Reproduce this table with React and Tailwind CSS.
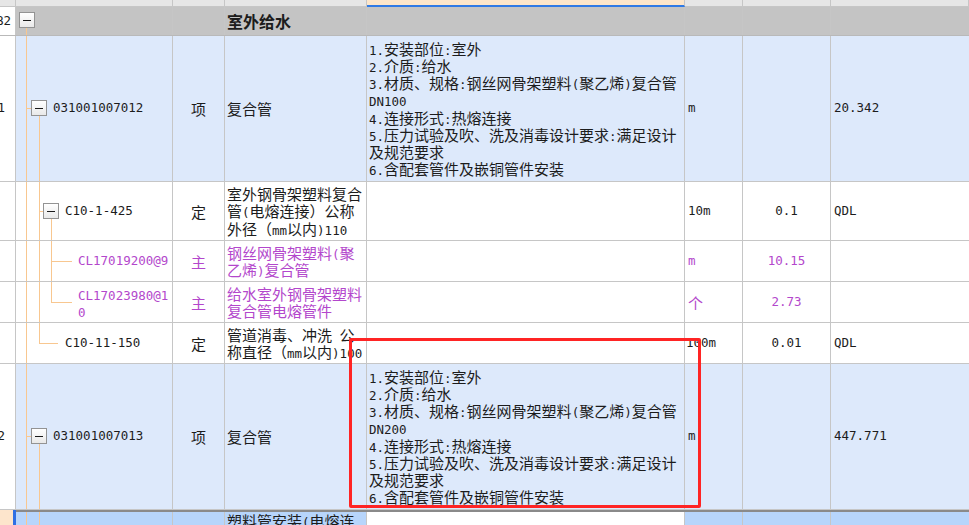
import clsx from "clsx";

const LINE = "absolute bg-[#f8c790]";
const PURPLE = "text-[#b347cc]";

// SimSun-style: half-width ASCII, full-width CJK
function T({ s }) {
  return s
    .split(/([\x20-\x7e]+)/)
    .filter(Boolean)
    .map((p, i) =>
      /[\x20-\x7e]/.test(p[0]) ? (
        <span key={i} className="font-['DejaVu_Sans_Mono',monospace] text-[12.5px] leading-none whitespace-pre">
          {p}
        </span>
      ) : (
        <span key={i}>{p}</span>
      )
    );
}

function Lines({ rows }) {
  return (
    <div>
      {rows.map((r, i) => (
        <div key={i} className="whitespace-nowrap h-[17.2px]">
          <T s={r} />
        </div>
      ))}
    </div>
  );
}

function Box({ className }) {
  return (
    <div
      className={clsx(
        "absolute w-[16px] h-[16px] border border-[#939393] bg-linear-to-b from-white to-[#e9e9e9] flex items-center justify-center",
        className
      )}
    >
      <div className="w-[8px] h-px bg-[#1a1a1a]" />
    </div>
  );
}

function Cell({ w, className, children }) {
  return (
    <div className={clsx(w, "shrink-0 border-r border-[#c6c6c6] flex items-center overflow-hidden", className)}>
      {children}
    </div>
  );
}

const W = ["w-[16px]", "w-[157px]", "w-[52px]", "w-[142px]", "w-[318px]", "w-[58px]", "w-[88px]", "flex-1"];

const desc = (dn) => [
  "1.安装部位:室外",
  "2.介质:给水",
  "3.材质、规格:钢丝网骨架塑料(聚乙烯)复合管",
  dn,
  "4.连接形式:热熔连接",
  "5.压力试验及吹、洗及消毒设计要求:满足设计",
  "及规范要求",
  "6.含配套管件及嵌铜管件安装",
];

function ItemRow({ num, code, dn, qty }) {
  return (
    <div className="flex h-[146px] border-b border-[#c6c6c6] bg-[#dde9fb]">
      <Cell w={W[0]} className="bg-white justify-end pr-[10px]">
        <T s={num} />
      </Cell>
      <Cell w={W[1]} className="relative pl-[37px]">
        <div className={clsx(LINE, "left-[10px] inset-y-0 w-px")} />
        <div className={clsx(LINE, "left-[10px] top-[72px] w-[5px] h-px")} />
        <div className={clsx(LINE, "left-[23px] top-[80px] bottom-0 w-px")} />
        <Box className="left-[15px] top-[64px]" />
        <T s={code} />
      </Cell>
      <Cell w={W[2]} className="justify-center">项</Cell>
      <Cell w={W[3]} className="pl-[2px]">复合管</Cell>
      <Cell w={W[4]} className="pl-[2px]">
        <Lines rows={desc(dn)} />
      </Cell>
      <Cell w={W[5]} className="pl-[3px]">
        <T s="m" />
      </Cell>
      <Cell w={W[6]} />
      <Cell w={W[7]} className="pl-[3px] border-r-0">
        <T s={qty} />
      </Cell>
    </div>
  );
}

export default function App() {
  return (
    <div className="relative w-[969px] h-[525px] overflow-hidden bg-white text-[15px] leading-[17px] text-[#1c1c1c] font-['Noto_Sans_CJK_SC',sans-serif]">
      {/* column header strip */}
      <div className="flex h-[7px] bg-[#e6e6e6]">
        {W.map((w, i) =>
          i === 4 ? (
            <div key={i} className={clsx(w, "shrink-0 bg-[#fde6ca] border-r border-[#c6c6c6] border-b-2 border-b-[#2f7ae5]")} />
          ) : (
            <div key={i} className={clsx(w, "shrink-0 border-r border-b border-[#c6c6c6]")} />
          )
        )}
      </div>

      {/* section row */}
      <div className="flex h-[29px] border-b border-[#b9b9b9] bg-[#c4c4c4]">
        <Cell w={W[0]} className="bg-white justify-end pr-[4px]">
          <T s="B2" />
        </Cell>
        <Cell w={W[1]} className="relative border-[#b9b9b9]">
          <Box className="left-[3px] top-[5px]" />
          <div className={clsx(LINE, "left-[10px] top-[21px] bottom-0 w-px")} />
        </Cell>
        <Cell w={W[2]} className="border-[#b9b9b9]" />
        <Cell w={W[3]} className="pl-[2px] font-bold text-[16px] border-[#b9b9b9]">室外给水</Cell>
        <Cell w={W[4]} className="border-[#b9b9b9]" />
        <Cell w={W[5]} className="border-[#b9b9b9]" />
        <Cell w={W[6]} className="border-[#b9b9b9]" />
        <Cell w={W[7]} className="border-r-0" />
      </div>

      <ItemRow num="1" code="031001007012" dn="DN100" qty="20.342" />

      {/* C10-1-425 */}
      <div className="flex h-[59px] border-b border-[#c6c6c6]">
        <Cell w={W[0]} />
        <Cell w={W[1]} className="relative pl-[49px]">
          <div className={clsx(LINE, "left-[10px] inset-y-0 w-px")} />
          <div className={clsx(LINE, "left-[23px] inset-y-0 w-px")} />
          <div className={clsx(LINE, "left-[23px] top-[29px] w-[4px] h-px")} />
          <div className={clsx(LINE, "left-[35px] top-[37px] bottom-0 w-px")} />
          <Box className="left-[27px] top-[21px]" />
          <T s="C10-1-425" />
        </Cell>
        <Cell w={W[2]} className="justify-center">定</Cell>
        <Cell w={W[3]} className="pl-[2px]">
          <Lines rows={["室外钢骨架塑料复合", "管(电熔连接）公称", "外径（mm以内)110"]} />
        </Cell>
        <Cell w={W[4]} />
        <Cell w={W[5]} className="pl-[3px]">
          <T s="10m" />
        </Cell>
        <Cell w={W[6]} className="justify-center">
          <T s="0.1" />
        </Cell>
        <Cell w={W[7]} className="pl-[3px] border-r-0">
          <T s="QDL" />
        </Cell>
      </div>

      {/* CL17019200@9 */}
      <div className={clsx("flex h-[41px] border-b border-[#c6c6c6]", PURPLE)}>
        <Cell w={W[0]} />
        <Cell w={W[1]} className="relative pl-[62px]">
          <div className={clsx(LINE, "left-[10px] inset-y-0 w-px")} />
          <div className={clsx(LINE, "left-[23px] inset-y-0 w-px")} />
          <div className={clsx(LINE, "left-[35px] inset-y-0 w-px")} />
          <div className={clsx(LINE, "left-[35px] top-[20px] w-[21px] h-px")} />
          <T s="CL17019200@9" />
        </Cell>
        <Cell w={W[2]} className="justify-center">主</Cell>
        <Cell w={W[3]} className="pl-[2px]">
          <Lines rows={["钢丝网骨架塑料(聚", "乙烯)复合管"]} />
        </Cell>
        <Cell w={W[4]} />
        <Cell w={W[5]} className="pl-[3px]">
          <T s="m" />
        </Cell>
        <Cell w={W[6]} className="justify-center">
          <T s="10.15" />
        </Cell>
        <Cell w={W[7]} className="border-r-0" />
      </div>

      {/* CL17023980@10 */}
      <div className={clsx("flex h-[41px] border-b border-[#c6c6c6]", PURPLE)}>
        <Cell w={W[0]} />
        <Cell w={W[1]} className="relative pl-[62px]">
          <div className={clsx(LINE, "left-[10px] inset-y-0 w-px")} />
          <div className={clsx(LINE, "left-[23px] inset-y-0 w-px")} />
          <div className={clsx(LINE, "left-[35px] top-0 h-[21px] w-px")} />
          <div className={clsx(LINE, "left-[35px] top-[20px] w-[21px] h-px")} />
          <Lines rows={["CL17023980@1", "0"]} />
        </Cell>
        <Cell w={W[2]} className="justify-center">主</Cell>
        <Cell w={W[3]} className="pl-[2px]">
          <Lines rows={["给水室外钢骨架塑料", "复合管电熔管件"]} />
        </Cell>
        <Cell w={W[4]} />
        <Cell w={W[5]} className="pl-[3px]">个</Cell>
        <Cell w={W[6]} className="justify-center">
          <T s="2.73" />
        </Cell>
        <Cell w={W[7]} className="border-r-0" />
      </div>

      {/* C10-11-150 */}
      <div className="flex h-[41px] border-b border-[#c6c6c6]">
        <Cell w={W[0]} />
        <Cell w={W[1]} className="relative pl-[49px]">
          <div className={clsx(LINE, "left-[10px] inset-y-0 w-px")} />
          <div className={clsx(LINE, "left-[23px] top-0 h-[21px] w-px")} />
          <div className={clsx(LINE, "left-[23px] top-[20px] w-[19px] h-px")} />
          <T s="C10-11-150" />
        </Cell>
        <Cell w={W[2]} className="justify-center">定</Cell>
        <Cell w={W[3]} className="pl-[2px]">
          <Lines rows={["管道消毒、冲洗 公", "称直径（mm以内)100"]} />
        </Cell>
        <Cell w={W[4]} />
        <Cell w={W[5]} className="pl-[1px]">
          <T s="100m" />
        </Cell>
        <Cell w={W[6]} className="justify-center">
          <T s="0.01" />
        </Cell>
        <Cell w={W[7]} className="pl-[3px] border-r-0">
          <T s="QDL" />
        </Cell>
      </div>

      <ItemRow num="2" code="031001007013" dn="DN200" qty="447.771" />

      {/* selected row, partly visible */}
      <div className="flex h-[40px]">
        <div className={clsx(W[0], "shrink-0 bg-[#fde5cc] border-r-[3px] border-[#2f6fe3]")} />
        <div className="flex flex-1 border-t-2 border-[#8a8a8a] bg-[#b7d5fb]">
          <Cell w={W[1]} className="relative">
            <div className={clsx(LINE, "left-[10px] inset-y-0 w-px")} />
            <div className={clsx(LINE, "left-[23px] inset-y-0 w-px")} />
          </Cell>
          <Cell w={W[2]} />
          <Cell w={W[3]} className="pl-[2px] items-start border-[#8a8a8a]">
            <Lines rows={["塑料管安装(电熔连", "接)"]} />
          </Cell>
          <Cell w={W[4]} className="bg-white border-[#8a8a8a]" />
          <Cell w={W[5]} />
          <Cell w={W[6]} />
          <Cell w={W[7]} className="border-r-0" />
        </div>
      </div>

      {/* red annotation */}
      <div className="absolute left-[349px] top-[338px] w-[352px] h-[170px] border-[3px] border-[#ff2424] rounded-[2px] pointer-events-none" />
    </div>
  );
}
